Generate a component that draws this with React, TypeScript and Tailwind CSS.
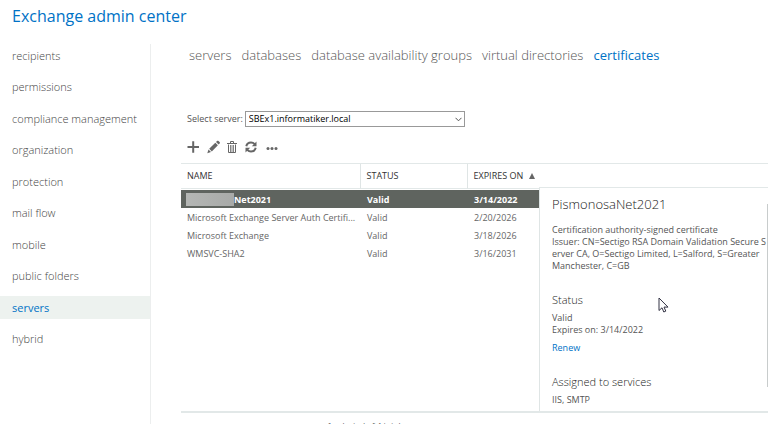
import { FC } from "react";

const navItems = [
  "recipients",
  "permissions",
  "compliance management",
  "organization",
  "protection",
  "mail flow",
  "mobile",
  "public folders",
  "servers",
  "hybrid",
];

const tabs = [
  "servers",
  "databases",
  "database availability groups",
  "virtual directories",
  "certificates",
];

const certificates = [
  { name: "Net2021", status: "Valid", expires: "3/14/2022", masked: true },
  { name: "Microsoft Exchange Server Auth Certifi...", status: "Valid", expires: "2/20/2026" },
  { name: "Microsoft Exchange", status: "Valid", expires: "3/18/2026" },
  { name: "WMSVC-SHA2", status: "Valid", expires: "3/16/2031" },
];

const Sidebar: FC = () => {
  return (
    <nav className="w-[151px] shrink-0 border-r border-[#eceeee]">
      <ul className="flex h-[306px] flex-col justify-between text-[11px] leading-[23px]">
        {navItems.map((item) => (
          <li key={item}>
            <a
              href="#"
              className={
                item === "servers"
                  ? "block bg-[#edf2ef] pl-3 text-[#0072c6]"
                  : "block pl-3 font-light text-[#444]"
              }
            >
              {item}
            </a>
          </li>
        ))}
      </ul>
    </nav>
  );
};

const Tabs: FC = () => {
  return (
    <nav className="flex gap-[10px] pl-2 text-[13px] leading-[22px] whitespace-nowrap">
      {tabs.map((tab) => (
        <a
          key={tab}
          href="#"
          className={tab === "certificates" ? "text-[#0072c6]" : "font-light text-[#555]"}
        >
          {tab}
        </a>
      ))}
    </nav>
  );
};

const Toolbar: FC = () => {
  return (
    <div className="flex h-4 items-center gap-[6px] pl-[6px] text-[#666]">
      <button aria-label="Add" className="h-4 w-[14px]">
        <svg viewBox="0 0 14 16" className="h-4 w-[14px]" fill="none" stroke="currentColor" strokeWidth="2">
          <path d="M.5 8h11.500M6.200 2.300v11.400" />
        </svg>
      </button>
      <button aria-label="Edit" className="h-4 w-[13px]">
        <svg viewBox="0 0 13 16" className="h-4 w-[13px]" fill="currentColor">
          <path d="M.3 14.200l1.200-3.600 2.500 2.500zM2.200 9.800l6.100-6.100 2.600 2.600-6.100 6.100zM9 3l1-1c.5-.5 1-.5 1.500 0l1.100 1.100c.5.5.5 1 0 1.500l-1 1z" />
        </svg>
      </button>
      <button aria-label="Delete" className="h-4 w-[12px]">
        <svg viewBox="0 0 12 16" className="h-4 w-[12px]" fill="none" stroke="currentColor">
          <path d="M1 4.500h10M4.500 4V2.500h3V4" />
          <path d="M2.500 5.500v8h7v-8" />
          <path d="M4.500 6v7M6 6v7M7.500 6v7" strokeWidth=".8" />
        </svg>
      </button>
      <button aria-label="Refresh" className="h-4 w-[14px]">
        <svg viewBox="0 0 14 16" className="h-4 w-[14px]" fill="none" stroke="currentColor" strokeWidth="2">
          <path d="M2.300 7.200c.5-2.500 2.500-3.700 4.700-3.700 1.500 0 2.700.6 3.700 1.700M11.700 8.800c-.5 2.500-2.500 3.700-4.700 3.700-1.500 0-2.700-.6-3.700-1.700" />
          <path d="M12.500 2.500v4.700H7.800zM1.500 13.500V8.800h4.700z" fill="currentColor" stroke="none" />
        </svg>
      </button>
      <button aria-label="More" className="ml-[2px] h-4 w-[12px]">
        <svg viewBox="0 0 12 16" className="h-4 w-[12px]" fill="currentColor">
          <circle cx="2" cy="9.500" r="1.500" />
          <circle cx="6" cy="9.500" r="1.500" />
          <circle cx="10" cy="9.500" r="1.500" />
        </svg>
      </button>
    </div>
  );
};

const CertificateTable: FC = () => {
  return (
    <table className="w-full table-fixed border-collapse text-left">
      <colgroup>
        <col />
        <col className="w-[107px]" />
        <col className="w-[72px]" />
      </colgroup>
      <thead className="text-[9px] text-[#333]">
        <tr className="h-6 border-b border-[#e2e8e8]">
          <th className="p-0 pl-[6px] font-normal">NAME</th>
          <th className="border-l border-[#dfe5e5] p-0 pl-[6px] font-normal">STATUS</th>
          <th className="border-l border-[#dfe5e5] p-0 pl-[6px] font-normal">
            <div className="flex items-center justify-between pr-1 whitespace-nowrap">
              EXPIRES ON
              <svg viewBox="0 0 6 6" className="size-[6px]" fill="#666">
                <path d="M3 0l3 6H0z" />
              </svg>
            </div>
          </th>
        </tr>
      </thead>
      <tbody className="text-[9px] leading-[17px] text-[#666]">
        <tr className="h-[2px]">
          <td colSpan={3} className="p-0"></td>
        </tr>
        {certificates.map((cert) => (
          <tr
            key={cert.name}
            className={cert.masked ? "h-[18px] bg-[#5f645f] font-bold text-white" : "h-[18px]"}
          >
            <td className="p-0 whitespace-nowrap">
              {cert.masked ? (
                <div className="flex items-center pl-[5px]">
                  <span className="h-[13px] w-12 bg-linear-to-r from-[#b5b7b5] to-[#a8aaa8]"></span>
                  {cert.name}
                </div>
              ) : (
                <div className="pl-[6px]">{cert.name}</div>
              )}
            </td>
            <td className="p-0 pl-[7px]">{cert.status}</td>
            <td className="p-0 pl-[7px]">{cert.expires}</td>
          </tr>
        ))}
      </tbody>
    </table>
  );
};

const Details: FC = () => {
  return (
    <div className="min-w-0 flex-1">
      <div className="h-6 border-b border-[#e2e8e8]"></div>
      <div className="relative h-[223px] border-l border-[#dfe5e5] pl-3 text-[9px] leading-3 text-[#555]">
        <h2 className="pt-2 text-[13px] leading-4 font-light text-[#222]">PismonosaNet2021</h2>
        <p className="pt-3">Certification authority-signed certificate</p>
        <p className="whitespace-nowrap">
          Issuer: CN=Sectigo RSA Domain Validation Secure S
          <br />
          erver CA, O=Sectigo Limited, L=Salford, S=Greater
          <br />
          Manchester, C=GB
        </p>
        <h3 className="pt-5 text-[11px] leading-4 font-light text-[#222]">Status</h3>
        <p className="pt-1">Valid</p>
        <p>Expires on: 3/14/2022</p>
        <a href="#" className="mt-[6px] block text-[#0072c6]">
          Renew
        </a>
        <h3 className="pt-5 text-[11px] leading-4 font-light text-[#222]">Assigned to services</h3>
        <p className="pt-1">IIS, SMTP</p>
        <div className="absolute top-4 right-0 h-[183px] w-px bg-[#c8cccc]"></div>
        <svg viewBox="0 0 11 17" className="absolute top-[109px] left-[118px] h-[17px] w-[11px]" fill="white" stroke="#334">
          <path d="M1 1v12.500l3-2.700 1.800 4.200 2-.9-1.800-4h4z" />
        </svg>
      </div>
    </div>
  );
};

const App: FC = () => {
  return (
    <div className="flex h-screen flex-col overflow-hidden bg-white font-['Open_Sans','Noto_Sans',sans-serif]">
      <header className="h-11 shrink-0 pt-1 pl-3">
        <h1 className="text-[16px] leading-6 text-[#0072c6]">Exchange admin center</h1>
      </header>
      <div className="flex flex-1">
        <Sidebar />
        <main className="min-w-0 flex-1 pl-[30px]">
          <Tabs />
          <div className="flex items-center gap-[2px] pt-[45px] pl-[6px] text-[9px] text-[#555]">
            <label htmlFor="server">Select server:</label>
            <div className="relative flex">
              <select
                id="server"
                className="h-4 w-[220px] appearance-none border border-[#999] bg-white pl-[3px] text-[9px] leading-[14px] text-black"
              >
                <option>SBEx1.informatiker.local</option>
              </select>
              <svg viewBox="0 0 7 5" className="pointer-events-none absolute top-[6px] right-[3px] h-[5px] w-[7px]" fill="none" stroke="#555">
                <path d="M.5.8l3 3 3-3" />
              </svg>
            </div>
          </div>
          <div className="pt-3 pb-2">
            <Toolbar />
          </div>
          <div className="flex border-t border-b-2 border-[#e2e8e8]">
            <div className="w-[358px] shrink-0">
              <CertificateTable />
            </div>
            <Details />
          </div>
          <p className="w-[366px] pt-1 text-center text-[8px] leading-4 text-[#555]">1 selected of 4 total</p>
        </main>
      </div>
    </div>
  );
};

export default App;
